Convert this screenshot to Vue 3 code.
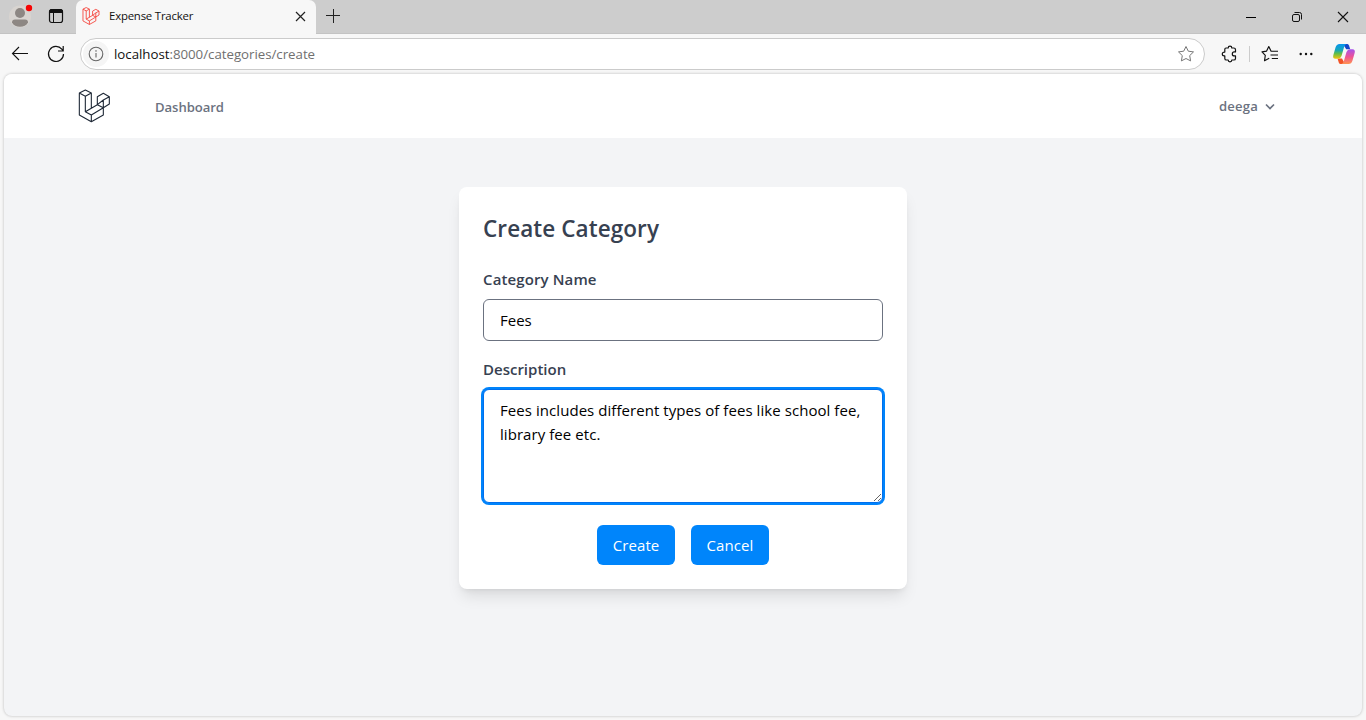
<script setup>
import { ref } from 'vue'

const name = ref('Fees')
const description = ref('Fees includes different types of fees like school fee, library fee etc.')
</script>

<template>
  <div class="window">
    <header class="tabs">
      <svg class="avatar" width="26" height="28" viewBox="0 0 26 28">
        <circle cx="12" cy="14.500" r="11" fill="#d8d4d0" />
        <circle cx="12" cy="11" r="5" fill="#8d8783" />
        <path d="M4 20.500Q4 17.500 7 17.500H17Q20 17.500 20 20.500Q17.500 24.800 12 24.800Q6.500 24.800 4 20.500Z" fill="#8d8783" />
        <circle cx="21" cy="6" r="4.200" fill="#d4d1ce" />
        <circle cx="21" cy="6" r="3.200" fill="#f60404" />
      </svg>
      <svg class="workspaces" width="16" height="16" viewBox="0 0 16 16" fill="none" stroke="#111">
        <rect x="1.500" y="1.500" width="13" height="13" rx="2.200" stroke-width="1.200" />
        <path d="M1.500 4.500V3.500Q1.500 1.500 3.500 1.500H12.500Q14.500 1.500 14.500 3.500V4.500Z" fill="#111" />
        <path d="M5.500 5V14" />
      </svg>
      <div class="tab">
        <svg class="favicon" width="18" height="18" viewBox="235 267 96 101" fill="none" stroke="#f5473f" stroke-width="5" stroke-linejoin="round">
          <path d="M238 279L256 270L274 279L256 289ZM238 279V345L274 365L310 345V300M256 289V335L274 345V365M274 279V325M256 335L292 314L310 323L274 345M292 314V290L310 280L328 290L310 300ZM328 290V312L310 323" />
        </svg>
        <span class="tab-title">Expense Tracker</span>
        <svg class="close" width="11" height="11" viewBox="0 0 11 11" stroke="#222" stroke-width="1.200"><path d="M1 1L10 10M10 1L1 10" /></svg>
      </div>
      <svg class="plus" width="14" height="14" viewBox="0 0 14 14" stroke="#222" stroke-width="1"><path d="M0 6.500H14M7.500 0V14" /></svg>
      <div class="controls">
        <svg width="10" height="12" viewBox="0 0 10 12" stroke="#000"><path d="M0 6.500H10" /></svg>
        <svg width="12" height="12" viewBox="0 0 12 12" fill="none" stroke="#111">
          <rect x="1.500" y="3.500" width="7" height="7" rx="1.500" /><path d="M3.500 1.500H8.500Q10.500 1.500 10.500 3.500V8.500" />
        </svg>
        <svg width="12" height="12" viewBox="0 0 12 12" stroke="#111" stroke-width="1.100"><path d="M1 1L11 11M11 1L1 11" /></svg>
      </div>
    </header>

    <div class="toolbar">
      <svg class="back" width="18" height="16" viewBox="0 0 18 16" fill="none" stroke="#111" stroke-width="1.100"><path d="M17 7.500H1.500M8 1L1.500 7.500L8 14" /></svg>
      <svg class="reload" width="18" height="18" viewBox="0 0 18 18" fill="none" stroke="#111" stroke-width="1.200"><path d="M16.500 9A7.500 7.500 0 1 1 14.800 4.200L16.200 6M16.200 1V6H11" /></svg>
      <div class="address">
        <span class="info">
          <svg width="16" height="16" viewBox="0 0 16 16" fill="none" stroke="#666" stroke-width="1.100">
            <circle cx="8" cy="8" r="6.800" /><path d="M8 7V11.500" /><circle cx="8" cy="4.900" r=".5" fill="#666" stroke-width=".5" />
          </svg>
        </span>
        <span class="url"><b>localhost</b>:8000/categories/create</span>
        <svg class="star" width="18" height="18" viewBox="0 0 18 18" fill="none" stroke="#777" stroke-width="1" stroke-linejoin="round"><path d="M9 1.500L11.300 6.200L16.500 6.900L12.700 10.600L13.600 15.900L9 13.500L4.400 15.900L5.300 10.600L1.500 6.900L6.700 6.200Z" /></svg>
      </div>
      <svg class="puzzle" width="18" height="18" viewBox="0 0 18 18" fill="none" stroke="#111" stroke-width="1.200" stroke-linejoin="round">
        <path d="M5 3H7.200A1.800 1.800 0 0 1 10.800 3H12.700Q14.500 3 14.500 4.800V6.900H13.300A2 2 0 0 0 13.300 10.900H14.500V13.400Q14.500 15 12.700 15H10.800A1.800 1.800 0 0 1 7.200 15H5.500Q3.800 15 3.800 13.400V10.900H3.200A1.900 1.900 0 0 1 3.200 7.100H3.800V4.500Q3.800 3 5 3Z" />
      </svg>
      <i class="divider"></i>
      <svg class="favorites" width="18" height="18" viewBox="0 0 18 18" fill="none" stroke="#111" stroke-width="1.150" stroke-linejoin="round"><path d="M12.300 6.200H10.100L7.800 1.500L5.600 6.100L1 6.900L4.300 10.400L3.500 15.800L8.200 13.300M11.300 6.200H17M9.500 10H17M10.800 13.500H17" /></svg>
      <svg class="dots" width="14" height="4" viewBox="0 0 14 4" fill="#111"><circle cx="1.700" cy="2" r="1.200" /><circle cx="7" cy="2" r="1.200" /><circle cx="12.300" cy="2" r="1.200" /></svg>
      <svg class="copilot" width="24" height="22" viewBox="0 0 24 22">
        <defs>
          <linearGradient id="cool" x1="0" y1="0" x2="0" y2="1"><stop offset="0" stop-color="#0895ef" /><stop offset=".42" stop-color="#16a7b8" /><stop offset=".65" stop-color="#62bd48" /><stop offset="1" stop-color="#f5c40c" /></linearGradient>
          <linearGradient id="warm" x1="0" y1="0" x2="0" y2="1"><stop offset="0" stop-color="#a653ed" /><stop offset=".5" stop-color="#ed5297" /><stop offset="1" stop-color="#ff9450" /></linearGradient>
        </defs>
        <path d="M11 1H15.500Q16.500 1 17 2.500L18.200 6.200H14.200Z" fill="#1546c9" />
        <path d="M5.500 15.500H10L13 21H8.500Q7.300 21 6.800 19.500Z" fill="#f25427" />
        <path d="M7.500 1H14.500Q12.800 1.500 12.100 4L9.500 13Q8.500 15.800 6 15.800H3.500Q.5 15.800 1.300 12.200L3.500 4.500Q4.500 1 7.500 1Z" fill="url(#cool)" />
        <path d="M16.500 21H9.500Q11.200 20.500 11.900 18L14.500 9Q15.500 6.200 18 6.200H20.500Q23.500 6.200 22.700 9.800L20.500 17.500Q19.500 21 16.500 21Z" fill="url(#warm)" />
      </svg>
    </div>

    <div class="page">
      <nav class="nav">
        <svg class="logo" width="34" height="34" viewBox="234 267 102 102" fill="none" stroke="#1f2937" stroke-width="3.300" stroke-linejoin="round">
          <path d="M238 279L256 270L274 279L256 289ZM238 279V345L274 365L310 345V300M256 289V335L274 345V365M274 279V325M256 335L292 314L310 323L274 345M292 314V290L310 280L328 290L310 300ZM328 290V312L310 323" />
        </svg>
        <a class="dashboard">Dashboard</a>
        <button class="user"><span>deega</span><svg width="10" height="7" viewBox="0 0 10 7" fill="none" stroke="#6b7280" stroke-width="1.700"><path d="M1 1.500L5 5.500L9 1.500" /></svg></button>
      </nav>
      <main>
        <form class="card" @submit.prevent>
          <h1><span>Create Category</span></h1>
          <label class="name-label" for="name">Category Name</label>
          <input id="name" v-model="name" type="text" />
          <label class="desc-label" for="description">Description</label>
          <textarea id="description" v-model="description" spellcheck="false"></textarea>
          <div class="actions"><button class="primary">Create</button><button class="primary cancel" type="button">Cancel</button></div>
        </form>
      </main>
    </div>
  </div>
</template>

<style>
body { overflow: hidden; background: #f7f7f7; }
</style>

<style scoped>
* { box-sizing: border-box; }
.window { height: 720px; display: flex; flex-direction: column; font-family: "Open Sans", "Noto Sans", sans-serif; background: #f7f7f7; }
svg { flex: none; display: block; }
.tabs { height: 34px; flex: none; display: flex; align-items: center; background: #cdcdcd; border-bottom: 1px solid #c3c3c3; }
.avatar { margin: 2px 0 0 8px; align-self: flex-start; }
.workspaces { margin: -1px 0 0 14px; }
.tab { width: 240px; height: 34px; margin-left: 12px; display: flex; align-items: center; border-radius: 7px 7px 0 0; background: #f7f7f7; align-self: flex-start; }
.favicon { margin: -2px 0 0 6px; }
.tab-title { margin: -3px 0 0 9px; font-size: 11.4px; color: #111; white-space: nowrap; letter-spacing: -.2px; }
.close { margin: -1px 10px 0 auto; }
.plus { margin: -2px 0 0 10px; }
.controls { display: flex; align-items: center; gap: 35px; margin-left: auto; padding-right: 17px; }
.controls svg:nth-child(-n+2) { position: relative; left: 1px; }
.toolbar { height: 40px; flex: none; display: flex; align-items: center; }
.back { margin-left: 11px; }
.reload { margin-left: 18px; }
.address { margin-left: 15px; width: 1125px; height: 32px; border: 1px solid #cbcbcb; border-radius: 16px; background: #fff; display: flex; align-items: center; }
.info { width: 26px; height: 26px; border-radius: 50%; background: #f5f5f5; margin-left: 2px; display: flex; align-items: center; justify-content: center; }
.url { margin-left: 5px; font-size: 13.3px; letter-spacing: -.03px; color: #707070; }
.url b { font-weight: 400; color: #111; }
.star { margin: 0 9px 0 auto; }
.puzzle { margin-left: 16px; }
.divider { width: 1px; height: 16px; background: #ccc; margin-left: 10px; }
.favorites { margin-left: 11px; }
.dots { margin-left: 20px; }
.copilot { margin-left: 19px; }
.page { height: 642px; margin: 0 4px; border-radius: 8px; overflow: hidden; background: #f3f4f6; box-shadow: 0 0 3px rgba(0,0,0,.25); }
.nav { height: 64px; background: #fff; display: flex; align-items: center; }
.logo { margin-left: 74px; }
.dashboard { margin-left: 43px; margin-top: 2px; font-size: 13.1px; font-weight: 600; letter-spacing: -.05px; color: #6b7280; }
.user { margin: 0 87px 0 auto; display: flex; align-items: center; gap: 7px; padding: 0; border: 0; background: transparent; font: 600 13.1px "Open Sans", sans-serif; letter-spacing: .2px; color: #6b7280; }
main { padding-top: 49px; }
.card { width: 448px; height: 402px; margin: 0 auto; padding: 24px; border-radius: 8px; background: #fff; box-shadow: 0 10px 15px -3px rgba(0,0,0,.1), 0 4px 6px -4px rgba(0,0,0,.1); color: #374151; }
h1 { margin: 0; height: 56px; font-size: 22.5px; line-height: 36px; font-weight: 600; letter-spacing: .08px; white-space: nowrap; }
label { display: block; height: 32px; line-height: 24px; font-size: 15px; font-weight: 600; letter-spacing: .12px; }
.desc-label { margin-top: 16px; letter-spacing: 0; }
input, textarea { display: block; width: 400px; margin: 0; padding: 8px 16px; border: 1px solid #6b7280; border-radius: 6px; background: #fff; color: #000; font: 15px/24px "Open Sans", sans-serif; outline: none; }
input { height: 42px; }
textarea { height: 114px; border-color: #006fee; box-shadow: 0 0 0 2px #0084fb; resize: vertical; overflow: hidden; letter-spacing: .06px; }
.actions { display: flex; justify-content: center; gap: 16px; margin-top: 22px; }
.primary { width: 78px; height: 40px; padding: 0; border: 0; border-radius: 6px; background: #0085fb; color: #fff; font: 15px/24px "Open Sans", sans-serif; letter-spacing: .1px; }
</style>
